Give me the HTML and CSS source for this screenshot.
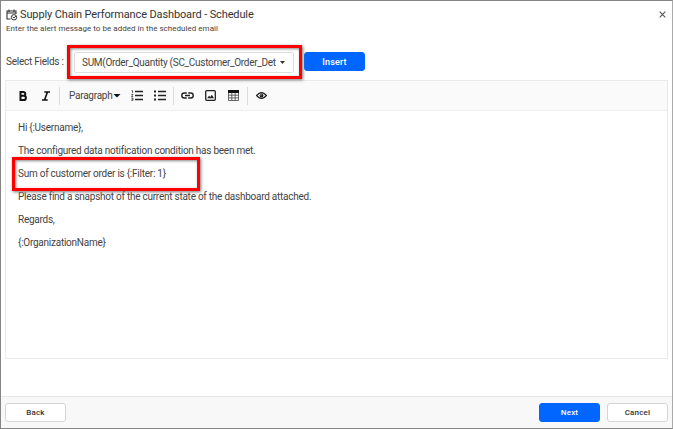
FILE: index.html
```html
<!DOCTYPE html>
<html lang="en">
<head>
<meta charset="utf-8">
<title>Supply Chain Performance Dashboard - Schedule</title>
<link rel="stylesheet" href="styles.css">
</head>
<body>
<div class="dialog">
  <header class="header">
    <div class="title-row">
      <svg class="cal" viewBox="0 0 12 12" fill="none" stroke="#333"><path d="M4.5 10H1V2H10V5M1 4H10M3 .5V3M8 .5V3" stroke-width="1.1"/><circle cx="8" cy="8.3" r="2.7"/><path d="M6.7 7.7 8 9 10 7"/></svg>
      <h1 class="title">Supply Chain Performance Dashboard - Schedule</h1>
      <svg class="close" viewBox="0 0 7 7" stroke="#555" stroke-width="1.1"><path d="M.7.7 6.3 6.3M6.3.7.7 6.3"/></svg>
    </div>
    <p class="subtitle">Enter the alert message to be added in the scheduled email</p>
  </header>
  <div class="fields">
    <span class="label">Select Fields :</span>
    <div class="select"><span class="value">SUM(Order_Quantity (SC_Customer_Order_Det</span><i class="caret"></i><span class="mark mark-select"></span></div>
    <button class="btn primary insert">Insert</button>
  </div>
  <section class="editor">
    <div class="toolbar">
      <svg class="tool bold" viewBox="0 0 8 10" fill="none" stroke="#111" stroke-width="2"><path d="M1.5 1H4.4A1.8 1.8 0 0 1 4.4 4.8H1.5ZM1.5 4.8H4.8A2.1 2.1 0 0 1 4.8 9H1.5Z"/></svg>
      <svg class="tool italic" viewBox="0 0 8 10" fill="none" stroke="#111" stroke-width="1.6"><path d="M2.3 1H8M0 9H5.7M5.5 1 2.5 9"/></svg>
      <i class="sep sep-a"></i>
      <span class="format">Paragraph</span><i class="caret big"></i>
      <svg class="tool ol" viewBox="0 0 12 11" fill="none" stroke="#222"><path d="M4 1.5H12M4 5.5H12M4 9.5H12" stroke-width="1.3"/><path d="M.5.6H1.5V3M.3 4.4H2L.5 6.5H2.2M.3 8H2V10.4H.3M.7 9.2H2" stroke-width=".7"/></svg>
      <svg class="tool ul" viewBox="0 0 12 11" stroke="#222"><path d="M4 1.5H12M4 5.5H12M4 9.5H12" stroke-width="1.3"/><path d="M0 1.5H2M0 5.5H2M0 9.5H2" stroke-width="2"/></svg>
      <i class="sep sep-b"></i>
      <svg class="tool link" viewBox="0 0 13 7" fill="none" stroke="#222" stroke-width="1.4"><path d="M5.8 1H3.3A2.5 2.5 0 0 0 3.3 6H5.8M7.2 1H9.7A2.5 2.5 0 0 1 9.7 6H7.2M4 3.5H9"/></svg>
      <svg class="tool image" viewBox="0 0 11 11" fill="none" stroke="#222" stroke-width="1.3"><rect x=".7" y=".7" width="9.6" height="9.6" rx="1"/><path d="M2.2 8.3 4 5.7 5.3 7 6.8 4.8 9 8.3Z" fill="#222" stroke="none"/></svg>
      <svg class="tool table" viewBox="0 0 11 11" fill="none" stroke="#444" stroke-width=".8"><path d="M.5 1V10.5H10.5V1M.5 5.2H10.5M.5 7.9H10.5M3.8 2V10.5M7.2 2V10.5"/><path d="M0 0H11V3H0Z" fill="#111" stroke="none"/></svg>
      <i class="sep sep-c"></i>
      <svg class="tool eye" viewBox="0 0 11 7" fill="none" stroke="#222" stroke-width="1.2"><path d="M.6 3.5Q5.5-2.4 10.4 3.5Q5.5 9.4.6 3.5Z"/><circle cx="5.5" cy="3.5" r="1.9" fill="#222" stroke="none"/><circle cx="5" cy="2.8" r=".6" fill="#fff" stroke="none"/></svg>
    </div>
    <div class="content">
      <p class="t1">Hi {:Username},</p>
      <p class="t2">The configured data notification condition has been met.</p>
      <p class="t3">Sum of customer order is {:Filter: 1}<span class="mark mark-text"></span></p>
      <p class="t4">Please find a snapshot of the current state of the dashboard attached.</p>
      <p class="t5">Regards,</p>
      <p class="t6">{:OrganizationName}</p>
    </div>
  </section>
  <footer class="footer">
    <button class="btn back">Back</button>
    <button class="btn primary next">Next</button>
    <button class="btn">Cancel</button>
  </footer>
</div>
</body>
</html>
```
FILE: styles.css
```css
* { box-sizing: border-box; }
body { margin: 0; font-family: Roboto, "Liberation Sans", sans-serif; color: #444; }
h1, p { margin: 0; font-weight: 400; }
svg { display: block; flex: none; }
.dialog { width: 673px; height: 429px; display: flex; flex-direction: column; background: #fff; border: 1px solid #858585; border-right-color: #aaa; }
.header { height: 50px; padding: 6px 5px 0; }
.title-row { display: flex; align-items: center; height: 15px; }
.cal { width: 12px; height: 12px; margin-right: 2px; }
.title { font-size: 11px; line-height: 15px; letter-spacing: -.125px; color: #333; white-space: nowrap; }
.close { width: 7px; height: 7px; margin-left: auto; margin-right: 1px; }
.subtitle { padding-top: 1px; font-size: 8px; line-height: 12px; letter-spacing: .035px; color: #444; }
.fields { display: flex; align-items: center; height: 21px; padding-left: 5px; }
.label { width: 68px; font-size: 10px; letter-spacing: -.25px; white-space: nowrap; }
.select { position: relative; display: flex; align-items: center; width: 220px; height: 21px; margin-top: 2px; padding: 0 7px; border: 1px solid #ddd; border-radius: 2px; }
.value { width: 198px; font-size: 10px; letter-spacing: -.29px; white-space: nowrap; }
.caret { flex: none; width: 5px; height: 3px; background: #333; clip-path: polygon(0 0, 100% 0, 50% 100%); }
.mark { position: absolute; border: 3px solid #f00; box-shadow: 1px 1px 3px #777, inset 1px 1px 3px #888; }
.mark-select { left: -8px; top: -8px; width: 235px; height: 34px; }
.btn { width: 61px; height: 19px; padding: 0; border: 1px solid #d5d5d5; border-radius: 3px; background: #fff; color: #333; font: 500 8px/17px Roboto, sans-serif; letter-spacing: .2px; }
.primary { background: #06f; border-color: #06f; color: #fff; }
.insert { margin-left: 10px; font-size: 9px; line-height: 19px; }
.editor { width: 663px; height: 279px; margin: 8px 0 0 4px; border: 1px solid #eaeaea; }
.toolbar { display: flex; align-items: center; height: 30px; padding-left: 13px; background: #fafafa; border-bottom: 1px solid #eee; }
.bold { width: 8px; height: 10px; }
.italic { width: 8px; height: 10px; margin-left: 15px; }
.sep { width: 1px; height: 18px; background: #ddd; }
.sep-a { margin-left: 9px; }
.format { width: 44px; margin-left: 9px; font-size: 10px; letter-spacing: -.25px; white-space: nowrap; }
.big { width: 8px; height: 4px; background: #111; }
.ol { width: 12px; height: 11px; margin-left: 10px; }
.ul { width: 12px; height: 11px; margin-left: 11px; }
.sep-b { margin-left: 7px; }
.link { width: 13px; height: 7px; margin-left: 7px; }
.image { width: 11px; height: 11px; margin-left: 11px; }
.table { width: 11px; height: 11px; margin-left: 12px; }
.sep-c { margin-left: 8px; }
.eye { width: 11px; height: 7px; margin-left: 8px; }
.content { padding: 5px 12px; font-size: 10px; line-height: 23px; letter-spacing: -.25px; }
.t3 { position: relative; }
.mark-text { left: -6px; top: -5px; width: 188px; height: 34px; }
.footer { display: flex; align-items: center; height: 32px; margin-top: auto; padding: 0 4px; background: #f8f8f8; border-top: 1px solid #e5e5e5; }
.back { margin-right: auto; }
.next { margin-right: 7px; }
```
